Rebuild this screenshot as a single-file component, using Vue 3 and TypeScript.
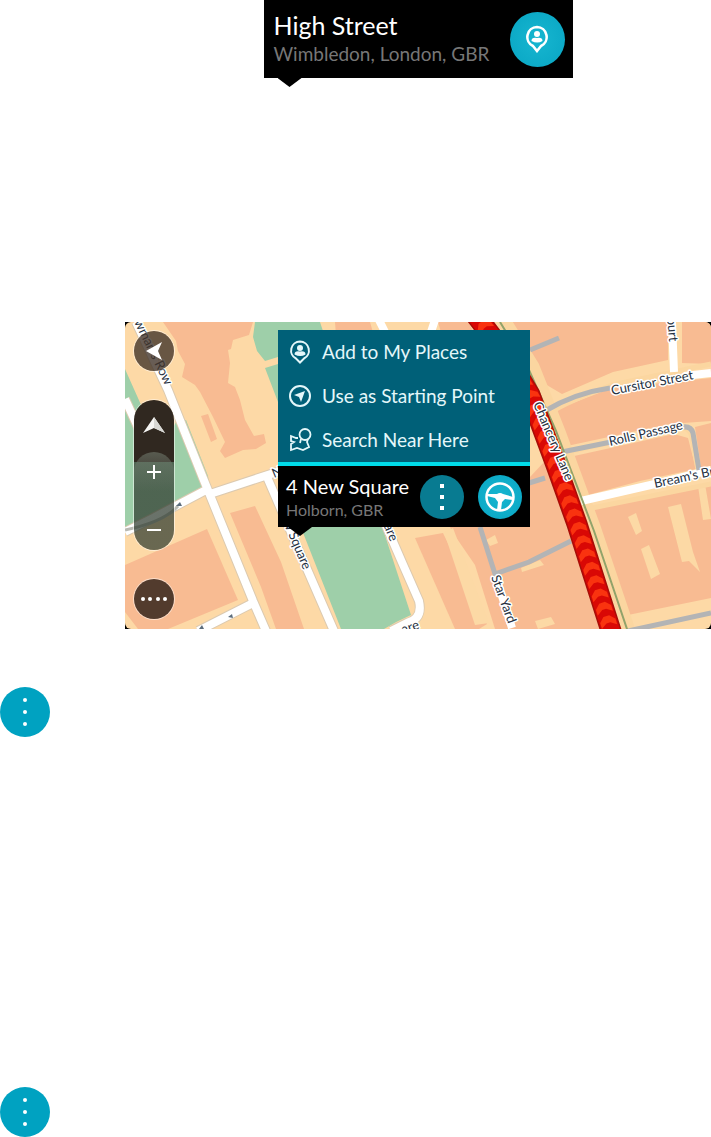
<script setup lang="ts">
interface Point { x: number; y: number }
interface Chevron extends Point { angle: number }

const actions = [
  { id: 'add', label: 'Add to My Places' },
  { id: 'start', label: 'Use as Starting Point' },
  { id: 'search', label: 'Search Near Here' },
]

// Chancery Lane centre line, used for the traffic arrows
const lane: Point[] = [
  { x: 481, y: 322 }, { x: 506, y: 355 }, { x: 530, y: 395 },
  { x: 556, y: 465 }, { x: 577, y: 524 }, { x: 611, y: 631 },
]

function chevronsAlong(points: Point[], step: number): Chevron[] {
  const result: Chevron[] = []
  let offset = 4
  for (let i = 1; i < points.length; i++) {
    const a = points[i - 1]
    const b = points[i]
    const length = Math.hypot(b.x - a.x, b.y - a.y)
    const angle = Math.atan2(b.y - a.y, b.x - a.x) * 180 / Math.PI - 90
    while (offset < length) {
      const t = offset / length
      result.push({ x: a.x + (b.x - a.x) * t, y: a.y + (b.y - a.y) * t, angle })
      offset += step
    }
    offset -= length
  }
  return result
}

const chevrons = chevronsAlong(lane, 14)
</script>

<template>
  <main class="page">
    <section class="place">
      <div class="place-body">
        <div class="names">
          <h2 class="title large">High Street</h2>
          <p class="sub large">Wimbledon, London, GBR</p>
        </div>
        <button class="round big" type="button" aria-label="Add to My Places">
          <svg class="pin" viewBox="0 0 24 28">
            <path d="M12 2a10 10 0 0 0-4 19l4 5 4-5a10 10 0 0 0-4-19z" fill="none" stroke="#fff" stroke-width="2.6" />
            <circle cx="12" cy="9" r="3" fill="#fff" />
            <path d="M6.500 16q0-4 5.500-3 5.500-1 5.500 3-5 3-11 0z" fill="#fff" />
          </svg>
        </button>
      </div>
      <i class="tail"></i>
    </section>

    <section class="map">
      <svg class="canvas" viewBox="125 322 586 307" preserveAspectRatio="xMidYMid slice" aria-hidden="true">
        <rect x="125" y="322" width="586" height="307" fill="#fdd9a6" />
        <g fill="#9ecfa9">
          <path d="M125 369l17 38 20 42 14-27 10-2 22 56 2 17-20 10-32 15-33 9z" />
          <path d="M255 322h65l4 12h-46v23l-13 4-8-10-4-14zM265 368l13-4v38z" />
          <path d="M298 520h82l31 95q-14 6-27 14h-43z" />
        </g>
        <g fill="#f8bb92">
          <path d="M163 322h90l-4 13-16 5-2 9-3 1 2 13-2 20 7 4 5 13 5 20 9 16 10-2 2 9-10 6-13 1-18 8-5-7 5-9-12-25-13-25-5-7-13-8 3-13-7-13-2-10z" />
          <path d="M201 416l7-2 9 25-6 3z" />
          <path d="M125 565l82-36 31 71-70 29h-30l-13-17z" />
          <path d="M230 513l25-7 26 56 23 67h-28l-15-42z" />
          <path d="M335 322h35l4 14h-38zM438 322h30l8 14h-34z" />
          <path d="M415 538l28-5 44 91-8 5h-24z" />
          <path d="M450 527h80v-50l15-16 15 20 25 60 16 62 5 26h-111l-20-64-22-32z" />
          <path d="M504 322h164v38l-55 12-51 22-17-10-15-26z" />
          <path d="M682 322h29v42l-29-1z" />
          <path d="M552 411l60-23 99-10v43l-42 3-116 25-9-24z" />
          <path d="M556 460l118-26 14 4 8 31-56 12-67 18z" />
          <path d="M591 508l101-19 19-4v113l-83 17z" />
          <path d="M695 427l16-4v43l-10 2z" />
        </g>
        <g fill="#fcd9a5">
          <path d="M444 532l9-4 36 95-14 2zM486 540l9-5 3 8-8 3zM521 568l19-8 4 5-22 7zM535 621l16-4 4 7-17 5z" />
          <path d="M628 517l8-4 6 18-6 4zM641 549l8-4 11 29-9 5zM668 507l13-3 12 48 7 20-11-11-7 1zM698 486l7-2 6 35-8 1z" />
        </g>
        <g fill="none" stroke="#fbd6a0" stroke-width="5">
          <path d="M550 412q35-18 62-27l99-21M550 456l125-28q15-3 17 10l6 32M592 508l119-24" />
          <path d="M504 322l28 45 26 65 35 95 35 104" stroke-width="15" />
        </g>
        <g fill="none" stroke="#dccab0" stroke-width="10">
          <path d="M136 322l32 68 35 88 50 123 13 30M125 532l28-14 53-28M210 494l70-23M267 477l23 53 44 101" />
          <path d="M378 507l23 53 18 41q4 18-12 22l-16 8M255 602l-57 29M125 399l12 26 6 12" />
        </g>
        <g fill="none" stroke="#fff" stroke-width="8">
          <path d="M136 322l32 68 35 88 50 123 13 30M125 532l28-14 53-28M210 494l70-23M267 477l23 53 44 101" />
          <path d="M378 507l23 53 18 41q4 18-12 22l-16 8M255 602l-57 29M125 399l12 26 6 12" />
          <path d="M379 320l6 12M435 320l-4 12M672 322l2 50M684 376l27-3M581 501l74-17 56-14M497 580l15 48" />
        </g>
        <path d="M125 530q39-8 53-24" fill="none" stroke="#b9bab3" stroke-width="3" />
        <g fill="none" stroke="#b3b4b5" stroke-width="5">
          <path d="M530 350l29-12M545 411q30-18 65-23M552 454l59-12M683 427q8-1 10 6l6 37M529 483l16-5" />
          <path d="M480 527l15 47 34-12 42-21M628 631l83-18" />
        </g>

        <path d="M500 322l29 48 27 61 38 100 34 101" fill="none" stroke="#91a36a" stroke-width="2" />
        <g fill="none" stroke-linecap="square" stroke-linejoin="round">
          <path d="M481 322l25 33 24 40 26 70 21 59 34 107" stroke="#a70e08" stroke-width="21" />
          <path d="M481 322l25 33 24 40 26 70 21 59 34 107" stroke="#d90805" stroke-width="18" />
        </g>
        <path
          v-for="(c, i) in chevrons" :key="i"
          d="M-8 1L-3-4H3L8 1V7L2 3H-2L-8 7z" fill="#f9330f"
          :transform="`translate(${c.x} ${c.y}) rotate(${c.angle})`"
        />
        <path d="M176 506l4-4 2 4zM228 617l4-3 1 4zM199 629l3-4 2 4z" fill="#5c6d7c" />

        <g class="road-names">
          <text transform="translate(134 322) rotate(64)">wman's Row</text>
          <text transform="translate(283 522) rotate(67)">w Square</text>
          <text transform="translate(381 519) rotate(68)">uare</text>
          <text transform="translate(403 634) rotate(-18)">are</text>
          <text transform="translate(274 478) rotate(-22)">N</text>
          <text transform="translate(533 404) rotate(67)">Chancery Lane</text>
          <text transform="translate(491 577) rotate(70)">Star Yard</text>
          <text transform="translate(667 318) rotate(85)">ourt</text>
          <text transform="translate(612 395) rotate(-11)">Cursitor Street</text>
          <text transform="translate(610 446) rotate(-13)">Rolls Passage</text>
          <text transform="translate(655 488) rotate(-12)">Bream's Br</text>
        </g>
      </svg>

      <nav class="controls" aria-label="Map controls">
        <button class="disc" type="button" aria-label="Compass">
          <svg viewBox="0 0 40 40"><path d="M12 20l16-9-4 9 4 9z" fill="#fff" /></svg>
        </button>
        <div class="zoom">
          <button class="tilt" type="button" aria-label="Change view">
            <svg viewBox="0 0 40 52"><path d="M20 17l11 16-11-5-11 5z" fill="#f5f5f3" /><path d="M20 17v11l11 5z" fill="#d8d8d4" /></svg>
          </button>
          <button class="plus" type="button" aria-label="Zoom in">
            <svg viewBox="0 0 40 40"><path d="M13 20h14M20 13v14" stroke="#fff" stroke-width="2" /></svg>
          </button>
          <button class="minus" type="button" aria-label="Zoom out">
            <svg viewBox="0 0 40 40"><path d="M13 20h14" stroke="#fff" stroke-width="2" /></svg>
          </button>
        </div>
        <button class="disc dark" type="button" aria-label="Main menu">
          <svg viewBox="0 0 40 40" fill="#fff">
            <circle cx="9" cy="20" r="2" /><circle cx="16" cy="20" r="2" /><circle cx="24" cy="20" r="2" /><circle cx="31" cy="20" r="2" />
          </svg>
        </button>
      </nav>

      <div class="popup">
        <ul class="actions">
          <li v-for="a in actions" :key="a.id">
            <button class="action" type="button">
              <svg class="icon" viewBox="0 0 24 24" fill="none" stroke="#e4f7fa" stroke-width="2">
                <template v-if="a.id === 'add'">
                  <path d="M12 1.500a9 9 0 0 0-4 17l4 4 4-4a9 9 0 0 0-4-17z" />
                  <circle cx="12" cy="8" r="3" fill="#e4f7fa" stroke="none" />
                  <path d="M6.500 14.500q0-4 5.500-3 5.500-1 5.500 3-5 3-11 0z" fill="#e4f7fa" stroke="none" />
                </template>
                <template v-else-if="a.id === 'start'">
                  <circle cx="12" cy="12" r="10" />
                  <path d="M17 7l-4 11-2-5-5-2z" fill="#e4f7fa" stroke="none" />
                </template>
                <template v-else>
                  <circle cx="17" cy="6.500" r="5.500" stroke-width="1.800" />
                  <path d="M10 10H8L3 8v5l3 1-3 2v6l6-2 6 2 6-3-2-5 1-3M13 11l-1 4" stroke-width="1.800" />
                </template>
              </svg>
              <span>{{ a.label }}</span>
            </button>
          </li>
        </ul>
        <div class="summary">
          <div class="names">
            <h2 class="title">4 New Square</h2>
            <p class="sub">Holborn, GBR</p>
          </div>
          <button class="round teal" type="button" aria-label="More options">
            <svg viewBox="0 0 44 44" fill="#fff"><path d="M20 9h4v4h-4zM20 20h4v4h-4zM20 31h4v4h-4z" /></svg>
          </button>
          <button class="round" type="button" aria-label="Drive">
            <svg viewBox="0 0 44 44">
              <circle cx="22" cy="22" r="13.500" fill="none" stroke="#fff" stroke-width="2.500" />
              <path d="M9 19l10 0q3-2 6 0l10 3v3l-8-1-3 3-1 8h-4l1-8-3-4-8-2z" fill="#fff" />
            </svg>
          </button>
        </div>
        <i class="tail"></i>
      </div>
    </section>

    <button class="more first" type="button" aria-label="More options">
      <svg viewBox="0 0 50 50" fill="#fff"><circle cx="25" cy="13" r="2" /><circle cx="25" cy="25" r="2" /><circle cx="25" cy="37" r="2" /></svg>
    </button>
    <button class="more second" type="button" aria-label="More options">
      <svg viewBox="0 0 50 50" fill="#fff"><circle cx="25" cy="13" r="2" /><circle cx="25" cy="25" r="2" /><circle cx="25" cy="37" r="2" /></svg>
    </button>
  </main>
</template>

<style>
body { background: #fff; }
</style>

<style scoped>
.page {
  display: flex;
  flex-direction: column;
  font-family: Lato, "Noto Sans", sans-serif;
}
button {
  display: block;
  flex: none;
  margin: 0;
  padding: 0;
  border: 0;
  background: none;
  font: inherit;
  cursor: pointer;
}
svg { display: block; flex: none; }
.place {
  align-self: flex-start;
  width: 309px;
  margin: 0 0 235px calc(50% - 92px);
}
.place-body {
  display: flex;
  align-items: center;
  justify-content: space-between;
  height: 78px;
  padding: 0 8px 0 10px;
  background: #000;
}
.tail {
  display: block;
  width: 24px;
  height: 9px;
  margin-left: 14px;
  background: #000;
  clip-path: polygon(0 0, 100% 0, 50% 100%);
}
.title {
  margin: 0;
  color: #fff;
  font-size: 20px;
  line-height: 26px;
  font-weight: 400;
  white-space: nowrap;
}
.sub {
  margin: 0;
  color: #777;
  font-size: 16px;
  line-height: 22px;
  white-space: nowrap;
}
.title.large { font-size: 25px; line-height: 30px; }
.sub.large { font-size: 19px; line-height: 28px; }
.round {
  width: 44px;
  height: 44px;
  border-radius: 50%;
  background: radial-gradient(#17b6d0, #08a5c3);
}
.round.teal { background: #087b91; }
.round.big { width: 55px; height: 55px; }
.pin { width: 24px; height: 28px; margin: 0 auto; }
.map {
  position: relative;
  margin-left: 125px;
  background: #000;
}
.canvas {
  width: 100%;
  height: 307px;
  border-radius: 6px;
}
.road-names {
  font-size: 13px;
  fill: #26313f;
  stroke: #fff;
  stroke-width: 3px;
  stroke-linejoin: round;
  paint-order: stroke;
}
.controls {
  position: absolute;
  top: 9px;
  left: 9px;
  display: flex;
  flex-direction: column;
  width: 40px;
}
.controls button { width: 100%; }
.disc {
  height: 40px;
  border-radius: 50%;
  background: rgb(66 52 42 / 80%);
  box-shadow: 0 0 0 1px rgb(255 255 255 / 50%);
}
.disc.dark { background: #523b2d; }
.zoom {
  margin: 29px 0;
  border-radius: 20px;
  overflow: hidden;
  background: linear-gradient(#302820 0 62px, rgb(48 60 48 / 72%) 62px);
  box-shadow: 0 0 0 1px rgb(255 255 255 / 50%);
}
.tilt { height: 52px; }
.plus {
  height: 40px;
  border-radius: 20px 20px 0 0;
  background: linear-gradient(rgb(115 125 112 / 60%), rgb(115 125 112 / 0%));
}
.minus { height: 40px; margin-top: 18px; }
.popup {
  position: absolute;
  top: 8px;
  left: calc(50% - 140px);
  width: 252px;
}
.actions {
  margin: 0;
  padding: 0;
  list-style: none;
  background: #006078;
  border-bottom: 4px solid #00dcea;
}
.action {
  display: flex;
  align-items: center;
  gap: 10px;
  width: 100%;
  height: 44px;
  padding: 0 10px;
  color: #e4f7fa;
  font-size: 19px;
  line-height: 26px;
  white-space: nowrap;
}
.icon { width: 24px; height: 24px; }
.summary {
  display: flex;
  align-items: center;
  gap: 14px;
  height: 61px;
  padding: 0 8px;
  background: #000;
}
.names { flex: 1; min-width: 0; }
.popup .tail { margin-left: 10px; }
.more {
  width: 50px;
  height: 50px;
  border-radius: 50%;
  background: #00a2c1;
}
.first { margin-top: 58px; }
.second { margin-top: 350px; }
</style>
